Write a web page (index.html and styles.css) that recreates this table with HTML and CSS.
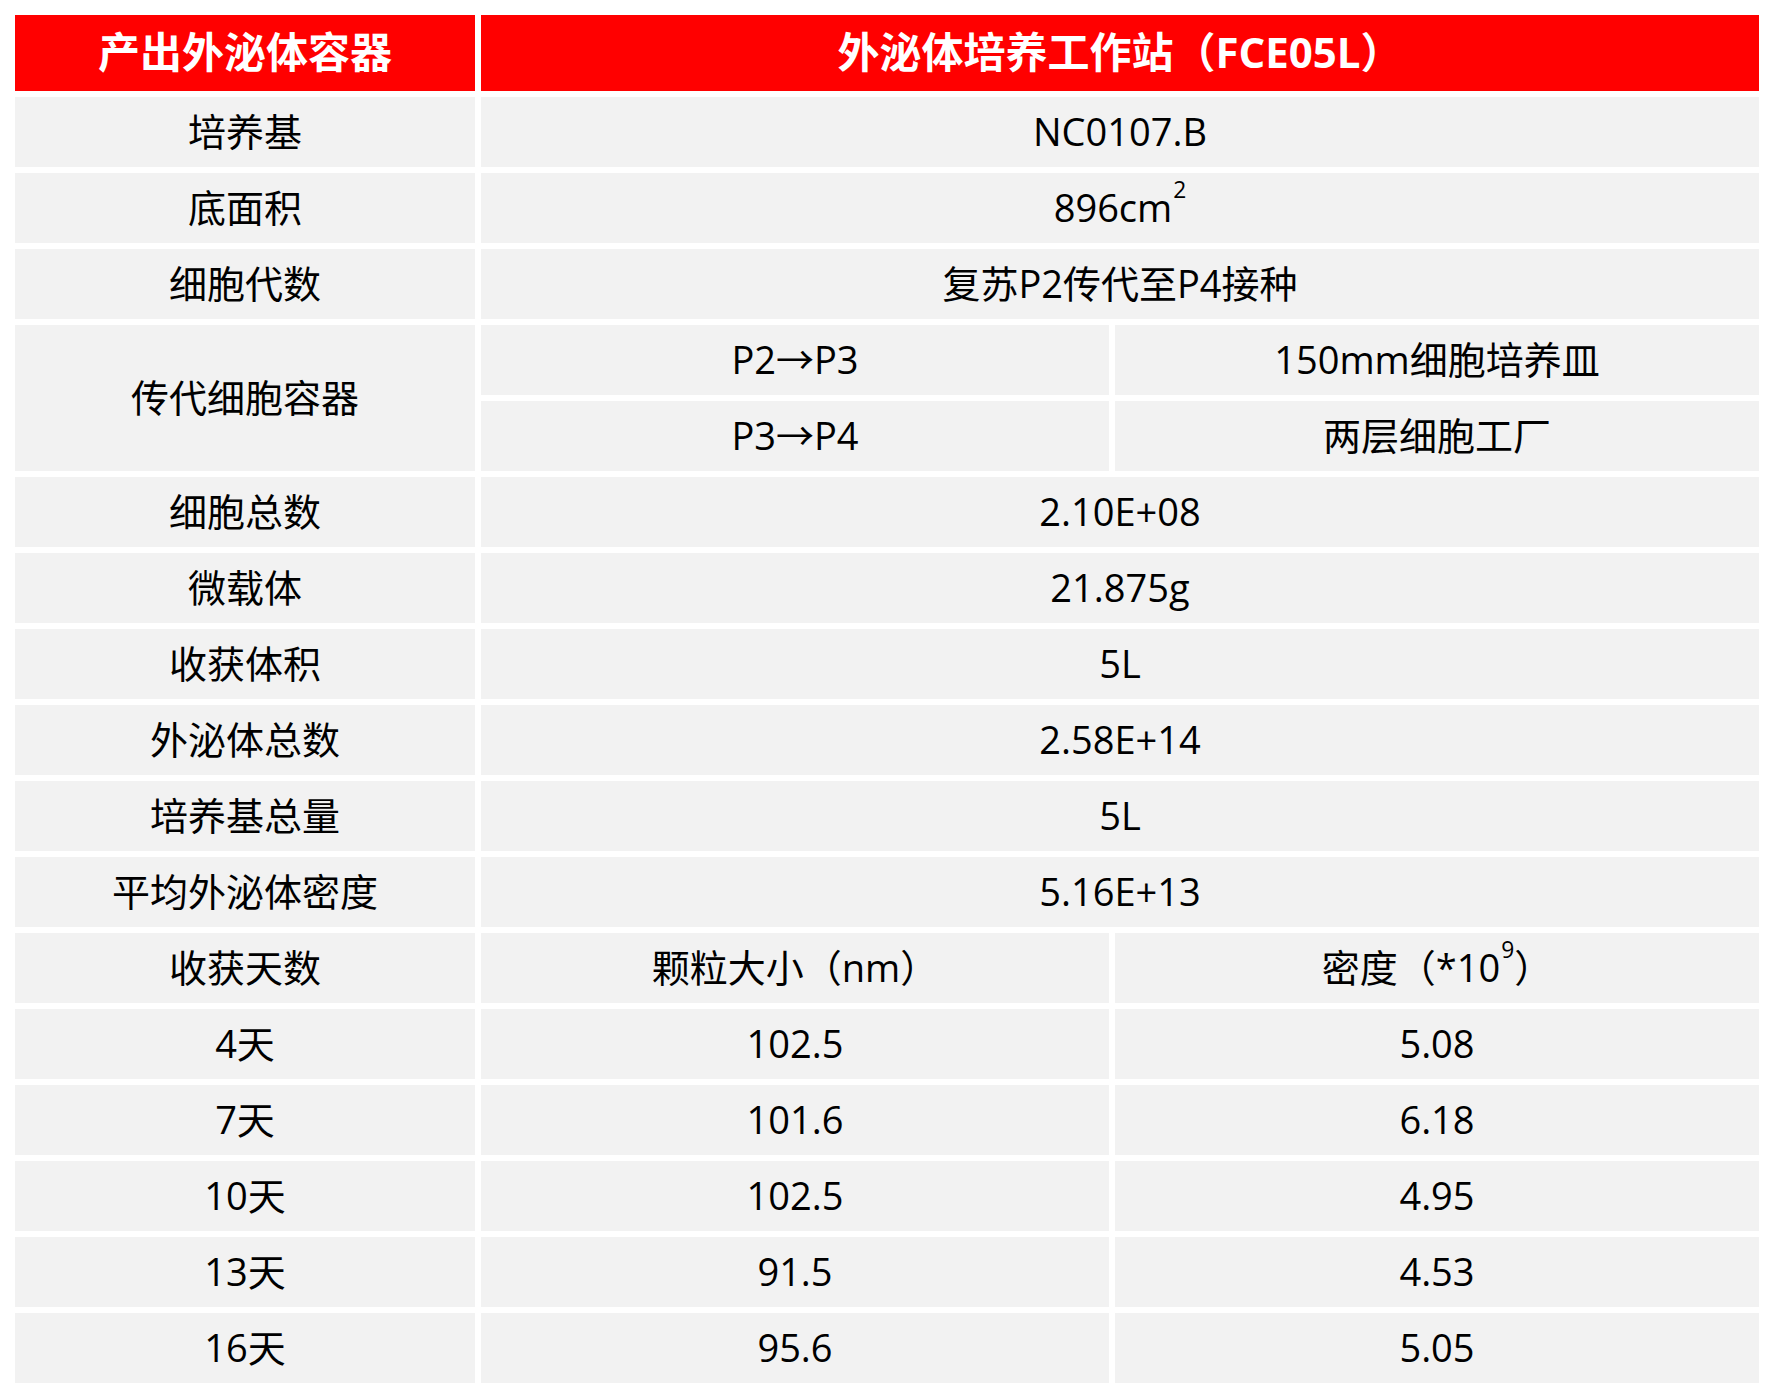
FILE: index.html
```html
<!DOCTYPE html>
<html lang="zh-CN">
<head>
<meta charset="utf-8">
<title>外泌体培养工作站</title>
<link rel="stylesheet" href="styles.css">
</head>
<body>
<div class="table">
  <div class="cell head">产出外泌体容器</div>
  <div class="cell head span2">外泌体培养工作站（FCE05L）</div>

  <div class="cell">培养基</div>
  <div class="cell span2">NC0107.B</div>

  <div class="cell">底面积</div>
  <div class="cell span2">896cm<sup>2</sup></div>

  <div class="cell">细胞代数</div>
  <div class="cell span2">复苏P2传代至P4接种</div>

  <div class="cell rspan2">传代细胞容器</div>
  <div class="cell">P2→P3</div>
  <div class="cell">150mm细胞培养皿</div>
  <div class="cell">P3→P4</div>
  <div class="cell">两层细胞工厂</div>

  <div class="cell">细胞总数</div>
  <div class="cell span2">2.10E+08</div>

  <div class="cell">微载体</div>
  <div class="cell span2">21.875g</div>

  <div class="cell">收获体积</div>
  <div class="cell span2">5L</div>

  <div class="cell">外泌体总数</div>
  <div class="cell span2">2.58E+14</div>

  <div class="cell">培养基总量</div>
  <div class="cell span2">5L</div>

  <div class="cell">平均外泌体密度</div>
  <div class="cell span2">5.16E+13</div>

  <div class="cell">收获天数</div>
  <div class="cell">颗粒大小（nm）</div>
  <div class="cell">密度（*10<sup>9</sup>）</div>

  <div class="cell">4天</div>
  <div class="cell">102.5</div>
  <div class="cell">5.08</div>

  <div class="cell">7天</div>
  <div class="cell">101.6</div>
  <div class="cell">6.18</div>

  <div class="cell">10天</div>
  <div class="cell">102.5</div>
  <div class="cell">4.95</div>

  <div class="cell">13天</div>
  <div class="cell">91.5</div>
  <div class="cell">4.53</div>

  <div class="cell">16天</div>
  <div class="cell">95.6</div>
  <div class="cell">5.05</div>
</div>
</body>
</html>
```
FILE: styles.css
```css
html, body {
  margin: 0;
  padding: 0;
  background: #ffffff;
}

body {
  padding: 15px;
  font-family: "Open Sans", "Noto Sans CJK SC", sans-serif;
  color: #000000;
}

.table {
  display: grid;
  grid-template-columns: 460px 628px 644px;
  grid-template-rows: 76px;
  grid-auto-rows: 70px;
  gap: 6px;
  width: 1744px;
}

.cell {
  background: #f2f2f2;
  display: flex;
  align-items: center;
  justify-content: center;
  font-size: 38px;
  line-height: 1;
  white-space: nowrap;
  padding-bottom: 2px;
  box-sizing: border-box;
}

.head {
  background: #ff0000;
  color: #ffffff;
  font-weight: 700;
  font-size: 42px;
}

.span2 {
  grid-column: span 2;
}

.rspan2 {
  grid-row: span 2;
}

sup {
  font-size: 0.6em;
  font-weight: 400;
  line-height: 0;
  vertical-align: baseline;
  position: relative;
  top: -0.75em;
  margin-left: 1px;
}
```
